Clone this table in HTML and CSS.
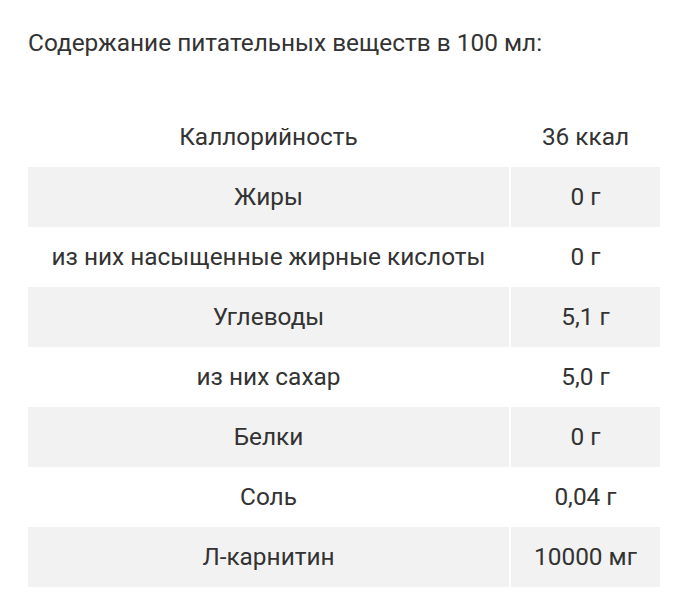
FILE: index.html
```html
<!DOCTYPE html>
<html lang="ru">
<head>
<meta charset="utf-8">
<link rel="stylesheet" href="styles.css">
</head>
<body>
<div class="page">
  <h2 class="title">Содержание питательных веществ в 100 мл:</h2>
  <table class="nutri">
    <tbody>
      <tr><td class="name">Каллорийность</td><td class="val">36 ккал</td></tr>
      <tr><td class="name">Жиры</td><td class="val">0 г</td></tr>
      <tr><td class="name">из них насыщенные жирные кислоты</td><td class="val">0 г</td></tr>
      <tr><td class="name">Углеводы</td><td class="val">5,1 г</td></tr>
      <tr><td class="name">из них сахар</td><td class="val">5,0 г</td></tr>
      <tr><td class="name">Белки</td><td class="val">0 г</td></tr>
      <tr><td class="name">Соль</td><td class="val">0,04 г</td></tr>
      <tr><td class="name">Л-карнитин</td><td class="val">10000 мг</td></tr>
    </tbody>
  </table>
</div>
</body>
</html>
```
FILE: styles.css
```css
html, body {
  margin: 0;
  padding: 0;
  background: #ffffff;
}
body {
  font-family: Roboto, "Noto Sans", sans-serif;
  color: #333333;
}
.page {
  padding: 27px 40px 0 28px;
}
.title {
  margin: 0;
  font-size: 24.4px;
  font-weight: 400;
  line-height: 32px;
  color: #333333;
}
.nutri {
  margin-top: 48px;
  width: 632px;
  border-collapse: collapse;
}
.nutri td {
  height: 60px;
  padding: 0;
  text-align: center;
  font-size: 24.4px;
  line-height: 28px;
  color: #333333;
}
.nutri .name {
  width: 481px;
  border-right: 2px solid #ffffff;
}
.nutri tr:nth-child(even) td {
  background: #f2f2f2;
}
```
